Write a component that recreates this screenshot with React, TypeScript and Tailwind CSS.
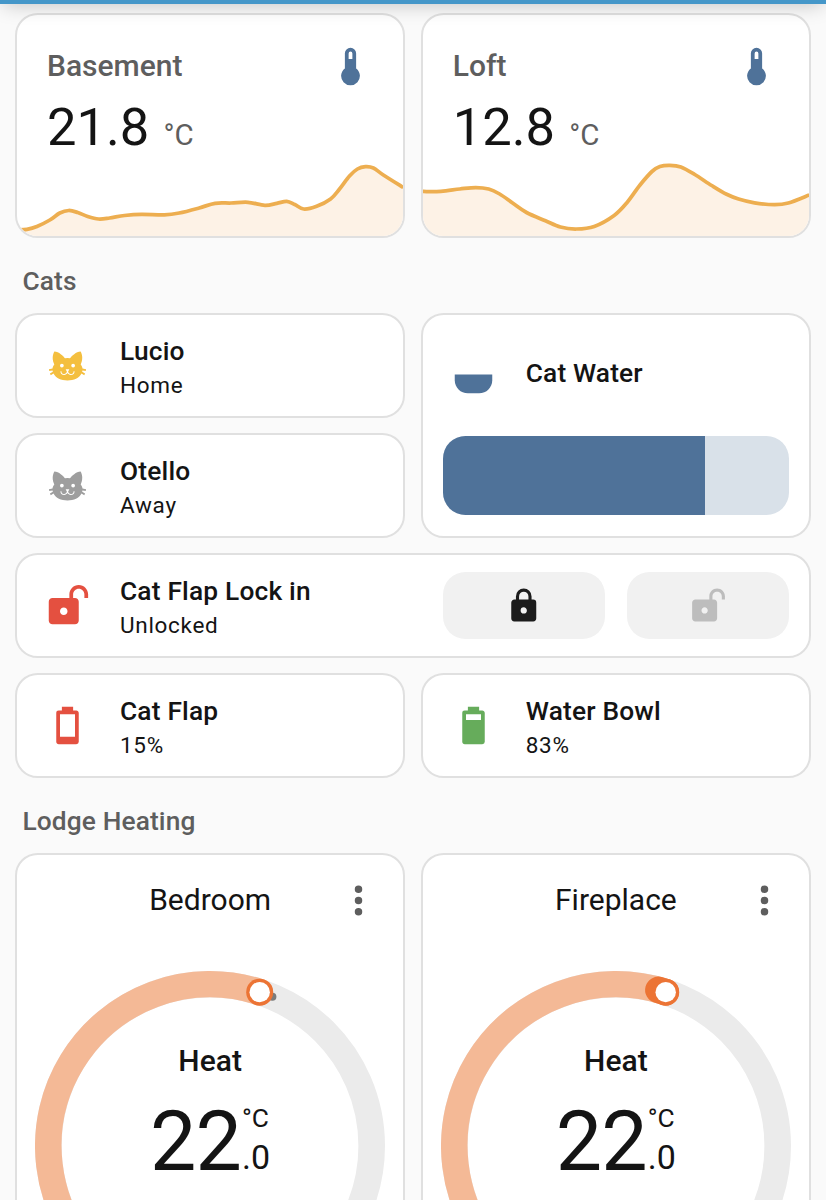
import type { ReactNode } from "react";

const icons = {
  thermometer:
    "M15 13V5A3 3 0 0 0 9 5V13A5 5 0 1 0 15 13M12 4A1 1 0 0 1 13 5V8H11V5A1 1 0 0 1 12 4Z",
  cat: "M12,8L10.67,8.09C9.81,7.07 7.4,4.5 5,4.5C5,4.5 3.03,7.46 4.96,11.41C4.41,12.24 4.07,12.67 4,13.66L2.07,13.95L2.28,14.93L4.04,14.67L4.18,15.38L2.61,16.32L3.08,17.21L4.53,16.32C5.68,18.76 8.59,20 12,20C15.41,20 18.32,18.76 19.47,16.32L20.92,17.21L21.39,16.32L19.82,15.38L19.96,14.67L21.72,14.93L21.93,13.95L20,13.66C19.93,12.67 19.59,12.24 19.04,11.41C20.97,7.46 19,4.5 19,4.5C16.6,4.5 14.19,7.07 13.33,8.09L12,8M9,11A1,1 0 0,1 10,12A1,1 0 0,1 9,13A1,1 0 0,1 8,12A1,1 0 0,1 9,11M15,11A1,1 0 0,1 16,12A1,1 0 0,1 15,13A1,1 0 0,1 14,12A1,1 0 0,1 15,11M11,14H13L12.3,15.39C12.5,16.03 13.06,16.5 13.75,16.5A1.5,1.5 0 0,0 15.25,15H15.75A2,2 0 0,1 13.75,17C13,17 12.35,16.59 12,16V16H12C11.65,16.59 11,17 10.25,17A2,2 0 0,1 8.25,15H8.75A1.5,1.5 0 0,0 10.25,16.5C10.94,16.5 11.5,16.03 11.7,15.39L11,14Z",
  bowl: "M22 15C22 18.87 18.87 22 15 22H9C5.13 22 2 18.87 2 15V12H22V15Z",
  lock: "M12,17A2,2 0 0,0 14,15C14,13.89 13.1,13 12,13A2,2 0 0,0 10,15A2,2 0 0,0 12,17M18,8A2,2 0 0,1 20,10V20A2,2 0 0,1 18,22H6A2,2 0 0,1 4,20V10C4,8.89 4.9,8 6,8H7V6A5,5 0 0,1 12,1A5,5 0 0,1 17,6V8H18M12,3A3,3 0 0,0 9,6V8H15V6A3,3 0 0,0 12,3Z",
  lockOpen:
    "M18 1C15.24 1 13 3.24 13 6V8H4C2.9 8 2 8.89 2 10V20C2 21.11 2.9 22 4 22H16C17.11 22 18 21.11 18 20V10C18 8.9 17.11 8 16 8H15V6C15 4.34 16.34 3 18 3C19.66 3 21 4.34 21 6V8H23V6C23 3.24 20.76 1 18 1M10 13C11.1 13 12 13.89 12 15C12 16.11 11.11 17 10 17C8.9 17 8 16.11 8 15C8 13.9 8.9 13 10 13Z",
  batteryLow:
    "M16,18H8V6H16M16.67,4H15V2H9V4H7.33A1.33,1.33 0 0,0 6,5.33V20.67C6,21.4 6.6,22 7.33,22H16.67A1.33,1.33 0 0,0 18,20.67V5.33C18,4.6 17.4,4 16.67,4Z",
  batteryHigh:
    "M16,9H8V6H16M16.67,4H15V2H9V4H7.33A1.33,1.33 0 0,0 6,5.33V20.67C6,21.4 6.6,22 7.33,22H16.67A1.33,1.33 0 0,0 18,20.67V5.33C18,4.6 17.4,4 16.67,4Z",
  dots: "M12,16A2,2 0 0,1 14,18A2,2 0 0,1 12,20A2,2 0 0,1 10,18A2,2 0 0,1 12,16M12,10A2,2 0 0,1 14,12A2,2 0 0,1 12,14A2,2 0 0,1 10,12A2,2 0 0,1 12,10M12,4A2,2 0 0,1 14,6A2,2 0 0,1 12,8A2,2 0 0,1 10,6A2,2 0 0,1 12,4Z",
};

type Point = [number, number];

const basement: Point[] = [
  [0, 73], [10, 72.3], [20, 69.5], [33, 63], [43, 56], [52, 53.5], [61, 55.5],
  [71, 59.5], [82, 62], [93, 61], [108, 58.5], [125, 57.3], [148, 57.8], [163, 56],
  [183, 51], [199, 46.3], [215, 46], [232, 45.3], [249, 48.3], [261, 46.3],
  [271, 44.3], [279, 47.5], [288, 52], [301, 49.3], [315, 42], [324, 32],
  [334, 19], [342, 12], [350, 9.7], [358, 11], [368, 18], [388, 30.5],
];

const loft: Point[] = [
  [0, 34.5], [18, 34.3], [37, 32], [53, 30.5], [66, 32], [77, 37], [90, 46],
  [104, 55.5], [123, 63.8], [138, 70], [154, 72], [172, 69.5], [192, 58.5],
  [205, 45.5], [218, 28], [230, 14.5], [238, 9.5], [248, 8.3], [259, 10],
  [273, 17.5], [290, 28.5], [305, 37.3], [317, 42], [333, 45.8], [353, 47.7],
  [367, 46], [388, 38],
];

// Catmull-Rom through the samples
function smooth(pts: Point[]) {
  let d = `M${pts[0][0]},${pts[0][1]}`;
  for (let i = 0; i < pts.length - 1; i++) {
    const a = pts[i - 1] ?? pts[i];
    const b = pts[i];
    const c = pts[i + 1];
    const e = pts[i + 2] ?? c;
    d += `C${b[0] + (c[0] - a[0]) / 6},${b[1] + (c[1] - a[1]) / 6} ${c[0] - (e[0] - b[0]) / 6},${c[1] - (e[1] - b[1]) / 6} ${c[0]},${c[1]}`;
  }
  return d;
}

export default function App() {
  return (
    <div className="h-screen overflow-hidden bg-[#fafafa] font-['Roboto',sans-serif] text-[#141414]">
      <div className="relative z-10 -mt-[60px] h-[64px] bg-[#4597c9] shadow-[0_4px_20px_-3px_rgba(0,0,0,0.22)]" />

      <main className="px-[15px] pt-[9px]">
        <div className="grid grid-cols-2 gap-[15.5px]">
          <SensorCard name="Basement" value="21.8" points={basement} />
          <SensorCard name="Loft" value="12.8" points={loft} />
        </div>

        <SectionTitle>Cats</SectionTitle>
        <div className="grid auto-rows-[105px] grid-cols-2 gap-x-[15.5px] gap-y-[15px]">
          <Tile icon={icons.cat} color="text-[#f4bf3f]" name="Lucio" state="Home" />

          <Card className="row-span-2">
            <div className="flex h-[118px] items-center pl-[28px]">
              <Icon path={icons.bowl} className="size-[45px] text-[#4f7299]" />
              <p className="ml-[30px] pb-[2px] text-[26.3px] leading-[38px] font-medium tracking-[0.15px]">Cat Water</p>
            </div>
            <div className="mr-[20.5px] ml-[20px] mt-[3px] h-[79px] overflow-hidden rounded-[22.5px] bg-[#d9e1e9]">
              <div className="h-full w-[75.8%] bg-[#4f7299]" />
            </div>
          </Card>

          <Tile icon={icons.cat} color="text-[#9e9e9e]" name="Otello" state="Away" />

          <Card className="col-span-2 flex items-center justify-between pr-[20.5px]">
            <TileContent icon={icons.lockOpen} color="text-[#e45040]" name="Cat Flap Lock in" state="Unlocked" />
            <div className="flex gap-[22.5px]">
              <FeatureButton icon={icons.lock} color="text-[#1c1c1c]" />
              <FeatureButton icon={icons.lockOpen} color="text-[#bdbdbd]" />
            </div>
          </Card>

          <Tile icon={icons.batteryLow} color="text-[#e45040]" name="Cat Flap" state="15%" />
          <Tile icon={icons.batteryHigh} color="text-[#66ac5b]" name="Water Bowl" state="83%" />
        </div>

        <SectionTitle>Lodge Heating</SectionTitle>
        <div className="grid grid-cols-2 gap-[15.5px]">
          <Thermostat name="Bedroom" current={22.7} />
          <Thermostat name="Fireplace" current={15.2} heating />
        </div>
      </main>
    </div>
  );
}

function Icon({ path, className }: { path: string; className: string }) {
  return (
    <svg viewBox="0 0 24 24" className={`shrink-0 ${className}`} fill="currentColor">
      <path d={path} />
    </svg>
  );
}

function Card({ className = "", children }: { className?: string; children: ReactNode }) {
  return (
    <div className={`overflow-hidden rounded-[22.5px] border-2 border-[#e0e0e0] bg-white ${className}`}>
      {children}
    </div>
  );
}

function SectionTitle({ children }: { children: ReactNode }) {
  return (
    <h2 className="flex h-[75px] items-center pt-[12px] pl-[7.5px] text-[26.3px] font-medium tracking-[0.12px] text-[#5e5e5e]">
      {children}
    </h2>
  );
}

function SensorCard({ name, value, points }: { name: string; value: string; points: Point[] }) {
  const line = smooth(points);

  return (
    <Card className="flex h-[225px] flex-col">
      <div className="flex items-center justify-between pt-[29px] pr-[30px] pl-[30px]">
        <p className="pb-[2px] text-[30px] leading-[42px] font-medium text-[#5e5e5e]">{name}</p>
        <Icon path={icons.thermometer} className="size-[45px] text-[#4f7299]" />
      </div>
      <div className="flex h-[60px] items-baseline pt-[8px] pl-[30px] leading-[60px]">
        <span className="text-[52.5px]">{value}</span>
        <span className="ml-[14px] text-[29.5px] text-[#5e5e5e]">°C</span>
      </div>
      <svg viewBox="0 0 388 79" preserveAspectRatio="none" className="mt-auto block h-[79px] w-full shrink-0">
        <path d={`${line}V79H0Z`} fill="#fdf2e6" />
        <path d={line} fill="none" stroke="#edae50" strokeWidth="3.75" />
      </svg>
    </Card>
  );
}

function TileContent({ icon, color, name, state }: { icon: string; color: string; name: string; state: string }) {
  return (
    <div className="flex h-full items-center pl-[28px]">
      <Icon path={icon} className={`size-[45px] ${color}`} />
      <div className="ml-[30px] pt-[2px]">
        <p className="text-[26.3px] leading-[37.5px] font-medium tracking-[0.19px]">{name}</p>
        <p className="text-[22.5px] leading-[30px] tracking-[0.7px]">{state}</p>
      </div>
    </div>
  );
}

function Tile(props: { icon: string; color: string; name: string; state: string }) {
  return (
    <Card>
      <TileContent {...props} />
    </Card>
  );
}

function FeatureButton({ icon, color }: { icon: string; color: string }) {
  return (
    <button className="flex h-[67.5px] w-[161.5px] items-center justify-center rounded-[22.5px] bg-[#f1f1f1]">
      <Icon path={icon} className={`size-[37.5px] ${color}`} />
    </button>
  );
}

const R = 161.7;

// degrees clockwise from the top of the dial
function onDial(deg: number) {
  const rad = (deg * Math.PI) / 180;
  return { x: 175 + R * Math.sin(rad), y: 175 - R * Math.cos(rad) };
}

function arc(from: number, to: number) {
  const a = onDial(from);
  const b = onDial(to);
  return `M${a.x},${a.y}A${R},${R} 0 ${to - from > 180 ? 1 : 0} 1 ${b.x},${b.y}`;
}

function Thermostat({ name, current, heating }: { name: string; current: number; heating?: boolean }) {
  const target = 17.9;
  const handle = onDial(target);
  const mark = onDial(current);

  return (
    <Card className="relative h-[460px]">
      <p className="pt-[21.5px] text-center text-[30px] leading-[45px]">{name}</p>
      <button className="absolute top-[22.5px] right-[22.5px]">
        <Icon path={icons.dots} className="size-[45px] text-[#5e5e5e]" />
      </button>

      <div className="relative mx-auto mt-[49px] size-[350px]">
        <svg viewBox="0 0 350 350" className="size-full" fill="none" strokeWidth="26.6">
          <path d={arc(-135, 135)} stroke="#ebebeb" strokeLinecap="round" />
          <path d={arc(-135, target)} stroke="#f4b996" strokeLinecap="round" />
          {heating ? (
            <path d={arc(current, target)} stroke="#ec7435" strokeLinecap="round" />
          ) : (
            <circle cx={mark.x} cy={mark.y} r="4" fill="#7b7b7b" />
          )}
          <circle cx={handle.x} cy={handle.y} r="13.5" fill="#ec7435" />
          <circle cx={handle.x} cy={handle.y} r="10.2" fill="#fff" />
        </svg>
        <div className="absolute inset-x-0 top-[67.5px] flex flex-col items-center">
          <p className="text-[30px] leading-[45px] font-medium">Heat</p>
          <div className="mt-[16.5px] flex">
            <span className="text-[82.5px] leading-[84px] tracking-[-0.9px]">22</span>
            <div className="ml-[1px] flex flex-col">
              <span className="pt-[3px] text-[26.3px] leading-[30px]">°C</span>
              <span className="pt-[5px] text-[34px] leading-[38px]">.0</span>
            </div>
          </div>
        </div>
      </div>
    </Card>
  );
}
